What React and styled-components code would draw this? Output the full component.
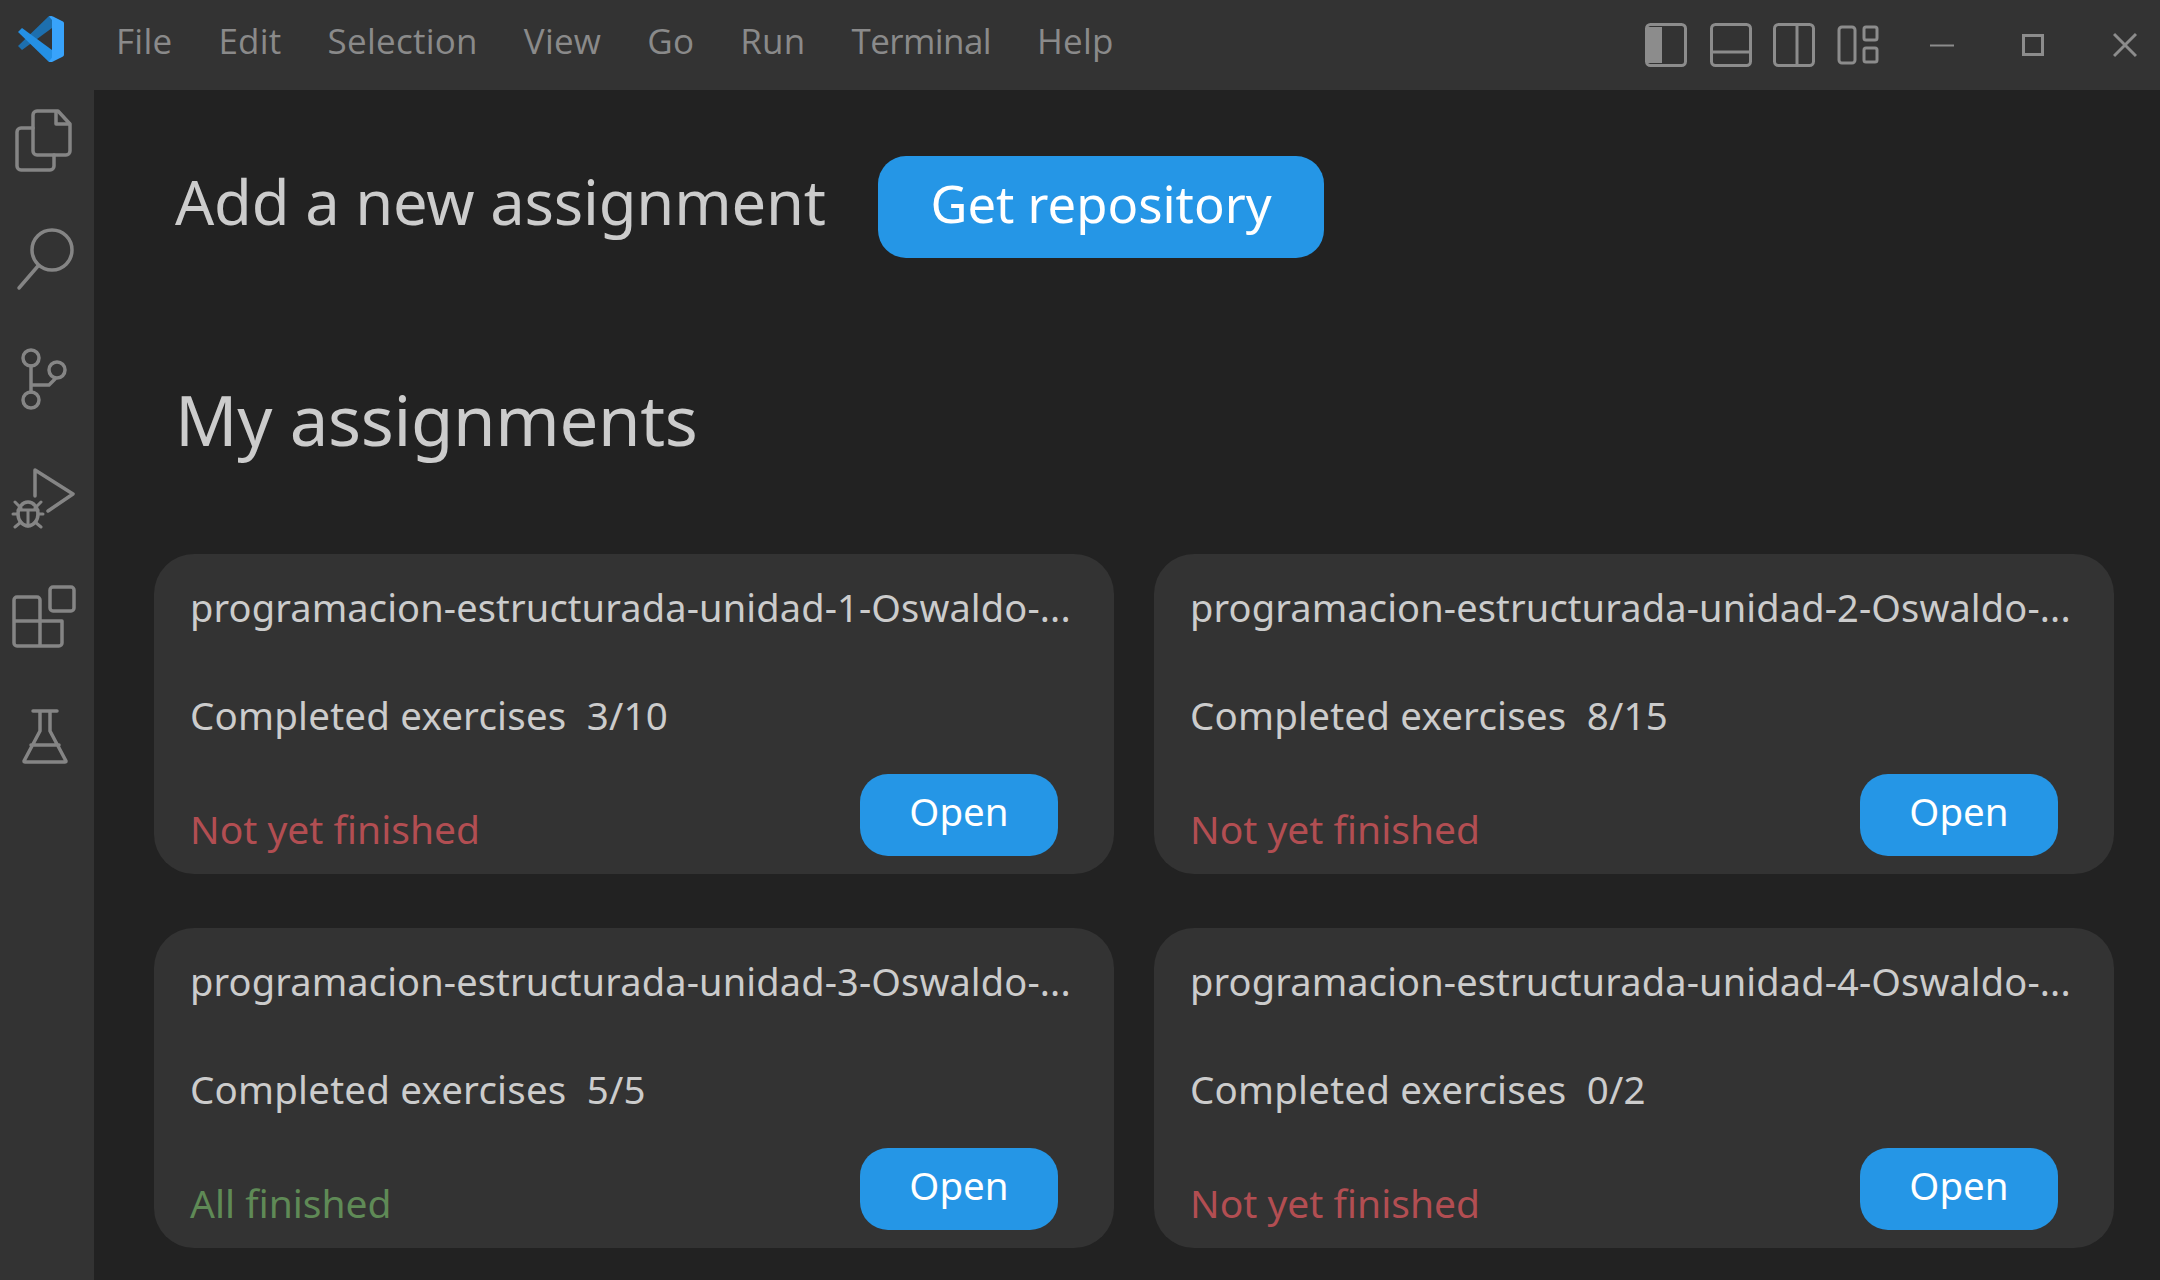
import React from "react";
import styled, { createGlobalStyle } from "styled-components";

const Global = createGlobalStyle`
  html, body { margin: 0; padding: 0; background: #222222; }
  #root { width: 2160px; height: 1280px; overflow: hidden; }
`;
const Shell = styled.div`
  width: 2160px; height: 1280px; display: flex; flex-direction: column;
  background: #222222; font-family: "Noto Sans", "Open Sans", sans-serif; overflow: hidden;
`;
const TitleBar = styled.header`
  height: 90px; flex: none; display: flex; align-items: center; background: #333333;
  padding-left: 18px; padding-right: 23px; box-sizing: border-box;
`;
const Logo = styled.svg`width: 46px; height: 46px; flex: none; margin-right: 52px; margin-top: -12px;`;
const Menu = styled.nav`display: flex; gap: 46px; flex: 1; margin-top: -8px;`;
const MenuItem = styled.span`
  font-family: "Open Sans", "Noto Sans", sans-serif; font-size: 35px; line-height: 48px; color: #8a8a8a;
  letter-spacing: ${p => (p.$tight ? "-0.6px" : "0.25px")};
`;
const WindowTools = styled.div`display: flex; align-items: center; margin-top: -1px;`;
const Tool = styled.svg`
  width: ${p => p.$w}px; height: 44px; margin-left: ${p => p.$ml}px; flex: none; display: block;
  fill: none; stroke: #8c8c8c; stroke-width: 3;
`;
const Body = styled.div`flex: 1; display: flex; min-height: 0;`;
const Activity = styled.aside`
  width: 94px; flex: none; background: #333333; display: flex; flex-direction: column; gap: 19.6px;
`;
const ActivityIcon = styled.svg`
  width: 94px; height: 100px; display: block; flex: none; fill: none; stroke: #858585; stroke-width: 3.5;
  stroke-linejoin: round; stroke-linecap: round;
`;
const Main = styled.main`flex: 1; padding: 66px 47px 0 60px; min-width: 0;`;
const HeadRow = styled.div`display: flex; align-items: center; height: 102px;`;
const Heading = styled.h1`
  margin: -12px 0 0; padding-left: 21px; font-weight: 400; font-size: 61.500px; line-height: 80px; color: #cccccc; white-space: nowrap;
  width: 724px; box-sizing: border-box; flex: none; letter-spacing: -0.2px;
`;
const PrimaryButton = styled.button`
  width: 446px; height: 102px; border: 0; border-radius: 28px; background: #2596e6; color: #ffffff; padding: 0 0 8px;
  font-family: inherit; font-size: 50.800px; font-weight: 400; flex: none;
`;
const Section = styled.h2`
  margin: 116px 0 0; padding-left: 21px; font-weight: 400; font-size: 69px; line-height: 90px; color: #cccccc;
  letter-spacing: -0.35px;
`;
const Cards = styled.div`display: grid; grid-template-columns: 960px 960px; column-gap: 40px; row-gap: 54px; margin-top: 90px;`;
const Card = styled.article`
  height: 320px; box-sizing: border-box; background: #333333; border-radius: 40px;
  padding: 26px 36px 18px; display: flex; flex-direction: column;
`;
const CardTitle = styled.div`font-size: 38px; line-height: 54px; color: #cccccc; white-space: nowrap; letter-spacing: 0.13px;`;
const Progress = styled.div`font-size: 38.500px; line-height: 54px; color: #cccccc; margin-top: 54px; margin-bottom: 1px; white-space: pre; letter-spacing: 0.2px;`;
const Footer = styled.div`display: flex; justify-content: space-between; align-items: flex-end; margin-top: 31px; padding-right: 20px;`;
const Status = styled.span`font-size: 39px; line-height: 54px; color: ${p => (p.$done ? "#5f8a56" : "#b24e52")};`;
const OpenButton = styled.button`
  width: 198px; height: 82px; border: 0; border-radius: 28px; background: #2596e6; color: #ffffff; padding: 0 0 8px;
  font-family: inherit; font-size: 38.500px; font-weight: 400;
`;

const VsLogo = () => (
  <Logo viewBox="0 0 46 46">
    <path d="M0 30l4 4 30-22V0h-3z" fill="#1d6fae" />
    <path d="M0 16l4-4 30 22v12h-3z" fill="#2490e4" />
    <path d="M31 0.500q2-1 4 0l10 5q1 .5 1 2v31q0 1.500-1 2l-10 5q-2 1-4 0l3-4V4z" fill="#38a3fb" />
  </Logo>
);

const menu = ["File", "Edit", "Selection", "View", "Go", "Run", "Terminal", "Help"];

const cards = [
  { n: 1, p: "3/10", done: false },
  { n: 2, p: "8/15", done: false },
  { n: 3, p: "5/5", done: true },
  { n: 4, p: "0/2", done: false },
];

export default function App() {
  return (
    <Shell>
      <Global />
      <TitleBar>
        <VsLogo />
        <Menu>{menu.map(m => <MenuItem key={m} $tight={m === "Terminal"}>{m}</MenuItem>)}</Menu>
        <WindowTools>
          <Tool $w={42} $ml={0} viewBox="0 0 42 44">
            <rect x="1.500" y="1.500" width="39" height="41" rx="4" />
            <path d="M2 4h15v36H2z" fill="#8c8c8c" stroke="none" />
          </Tool>
          <Tool $w={42} $ml={23} viewBox="0 0 42 44">
            <rect x="1.500" y="1.500" width="39" height="41" rx="4" />
            <path d="M2 29h38" />
          </Tool>
          <Tool $w={42} $ml={21} viewBox="0 0 42 44">
            <rect x="1.500" y="1.500" width="39" height="41" rx="4" />
            <path d="M24 2v40" />
          </Tool>
          <Tool $w={42} $ml={22} viewBox="0 0 42 44">
            <rect x="2" y="4" width="16" height="36" rx="3" />
            <rect x="27" y="4" width="13" height="13" rx="2" />
            <rect x="27" y="25" width="13" height="14" rx="2" />
          </Tool>
          <Tool $w={26} $ml={50} viewBox="0 0 26 44">
            <path d="M1 22.500h24" strokeWidth="2" />
          </Tool>
          <Tool $w={22} $ml={67} viewBox="0 0 22 44">
            <rect x="1.500" y="12.500" width="19" height="19" />
          </Tool>
          <Tool $w={24} $ml={69} viewBox="0 0 24 44">
            <path d="M1 11l22 22M23 11L1 33" />
          </Tool>
        </WindowTools>
      </TitleBar>
      <Body>
        <Activity>
          <ActivityIcon viewBox="0 0 94 100">
            <path d="M33 38H21a4 4 0 0 0-4 4v34a4 4 0 0 0 4 4h29a4 4 0 0 0 4-4V65" />
            <path d="M37 21h21l12 13v27a4 4 0 0 1-4 4H37a4 4 0 0 1-4-4V25a4 4 0 0 1 4-4z" />
            <path d="M56 22v12h13" />
          </ActivityIcon>
          <ActivityIcon viewBox="0 0 94 100">
            <circle cx="52" cy="40" r="20" />
            <path d="M38 56L19 78" />
          </ActivityIcon>
          <ActivityIcon viewBox="0 0 94 100">
            <circle cx="31" cy="29" r="8" />
            <circle cx="57" cy="41" r="8" />
            <circle cx="31" cy="71" r="8" />
            <path d="M31 37v26M31 56h18l6-6" />
          </ActivityIcon>
          <ActivityIcon viewBox="0 0 94 100">
            <path d="M35 47V21l38 24-25 17" />
            <ellipse cx="28" cy="65" rx="10" ry="12" />
            <path d="M18 61h20M28 61v16M15 53l6 6M41 53l-6 6M13 65h5M38 65h5M15 78l6-5M41 78l-6-5" strokeWidth="3" />
          </ActivityIcon>
          <ActivityIcon viewBox="0 0 94 100">
            <rect x="50" y="19" width="24" height="24" rx="3" />
            <path d="M17 29h20a3 3 0 0 1 3 3v46H17a3 3 0 0 1-3-3V32a3 3 0 0 1 3-3zM14 53h48V75a3 3 0 0 1-3 3H40" />
          </ActivityIcon>
          <ActivityIcon viewBox="0 0 94 100">
            <path d="M33 23h24M40 23v20L24 73a1 1 0 0 0 1 1h40a1 1 0 0 0 1-1L50 43V23M31 57h28" />
          </ActivityIcon>
        </Activity>
        <Main>
          <HeadRow>
            <Heading>Add a new assignment</Heading>
            <PrimaryButton>Get repository</PrimaryButton>
          </HeadRow>
          <Section>My assignments</Section>
          <Cards>
            {cards.map(c => (
              <Card key={c.n}>
                <CardTitle>{`programacion-estructurada-unidad-${c.n}-Oswaldo-...`}</CardTitle>
                <Progress>{`Completed exercises  ${c.p}`}</Progress>
                <Footer>
                  <Status $done={c.done}>{c.done ? "All finished" : "Not yet finished"}</Status>
                  <OpenButton>Open</OpenButton>
                </Footer>
              </Card>
            ))}
          </Cards>
        </Main>
      </Body>
    </Shell>
  );
}
